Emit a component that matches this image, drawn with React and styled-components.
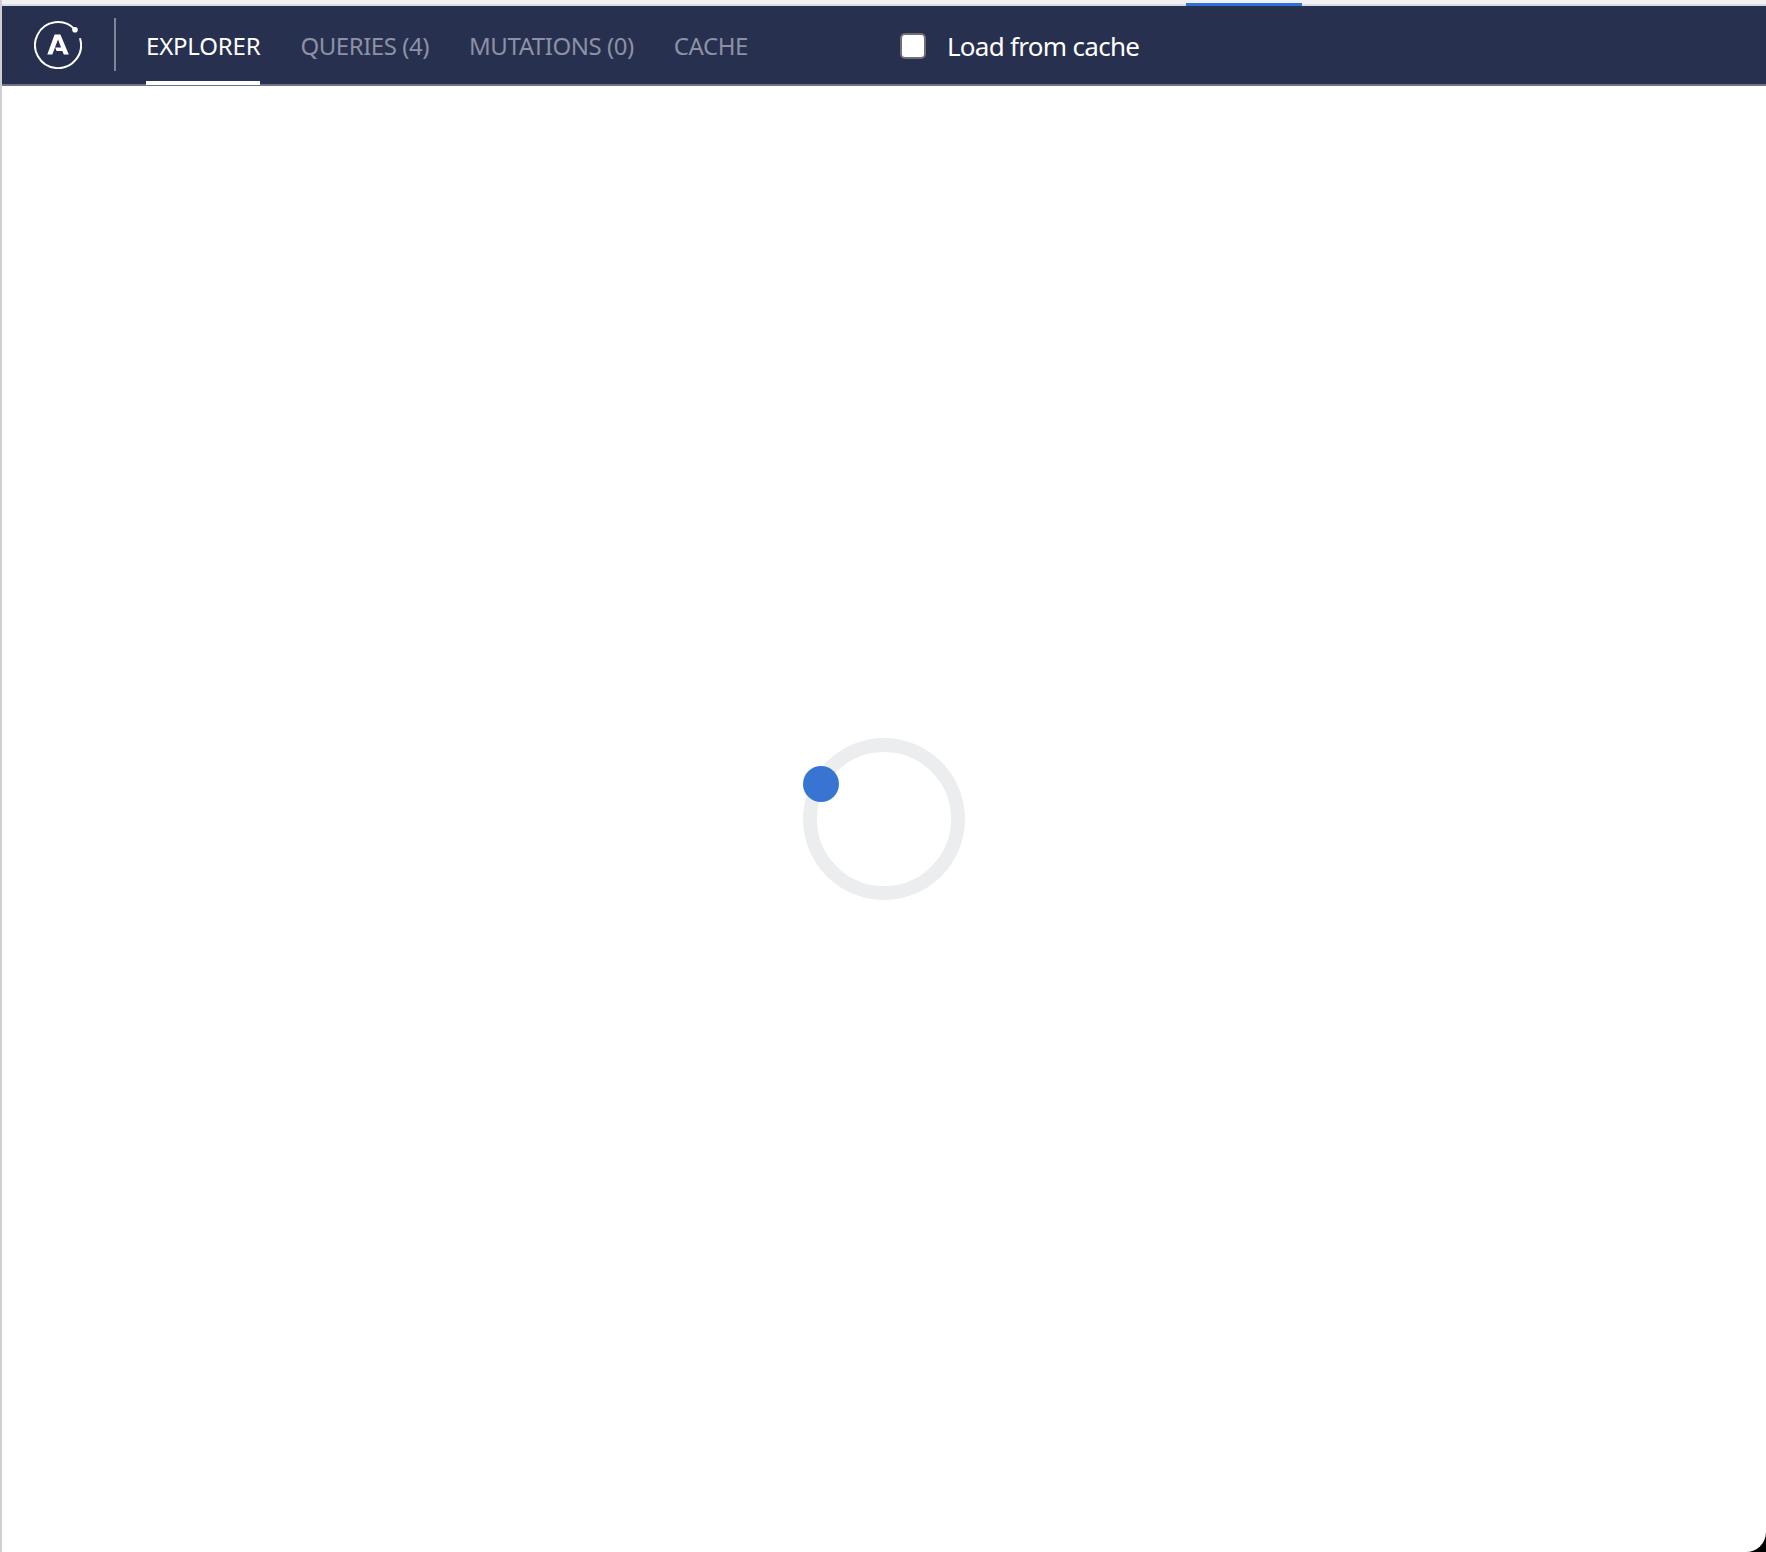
import React from "react";
import styled, { createGlobalStyle } from "styled-components";

const GlobalStyle = createGlobalStyle`
  html, body {
    margin: 0;
    padding: 0;
    background: #000;
  }

  #root {
    height: 1552px;
  }
`;

const Page = styled.div`
  display: flex;
  flex-direction: column;
  height: 1552px;
  background: #fff;
  border-left: 2px solid #cfcfd3;
  border-bottom-right-radius: 20px;
  overflow: hidden;
  font-family: "Noto Sans", "Open Sans", sans-serif;
`;

const TopStrip = styled.div`
  position: relative;
  flex: none;
  height: 4px;
  background: #f1f1f3;
  border-bottom: 2px solid #dcdde0;
`;

const ActiveIndicator = styled.div`
  position: absolute;
  left: 1184px;
  top: 3px;
  width: 116px;
  height: 3px;
  background: #3070d8;
`;

const Nav = styled.nav`
  display: flex;
  flex: none;
  align-items: stretch;
  height: 78px;
  background: #27304f;
  border-bottom: 2px solid #6f7388;
`;

const LogoBox = styled.div`
  display: flex;
  align-items: center;
  height: 53px;
  align-self: center;
  margin-top: -1px;
  padding: 0 32px;
  border-right: 2px solid #81859a;
`;

const Tabs = styled.ul`
  display: flex;
  gap: 40px;
  margin: 0 0 0 30px;
  padding: 0;
  list-style: none;
`;

const Tab = styled.li`
  position: relative;
  display: flex;
  align-items: center;
  padding-top: 1px;
  font-size: 24px;
  letter-spacing: ${(p) => (p.$active ? "-0.2px" : "-0.45px")};
  color: ${(p) => (p.$active ? "#fff" : "#8d91a5")};

  ${(p) =>
    p.$active &&
    `
    &::after {
      content: "";
      position: absolute;
      left: 0;
      right: 0;
      bottom: -1px;
      height: 4px;
      background: #fff;
    }
  `}
`;

const CacheLabel = styled.label`
  display: flex;
  align-items: center;
  gap: 21px;
  margin-left: 152px;
  padding-top: 1px;
  font-size: 26px;
  letter-spacing: -0.7px;
  color: #fff;
`;

const CacheCheckbox = styled.input`
  appearance: none;
  box-sizing: border-box;
  width: 26px;
  height: 26px;
  margin: 0;
  background: #fff;
  border: 2px solid #707074;
  border-radius: 5px;
`;

const Content = styled.main`
  display: flex;
  flex: 1;
  align-items: center;
  justify-content: center;
`;

const Spinner = styled.div`
  position: relative;
  box-sizing: border-box;
  width: 162px;
  height: 162px;
  border: 14.5px solid #ecedef;
  border-radius: 50%;
`;

const SpinnerDot = styled.div`
  position: absolute;
  left: -14.5px;
  top: 13.5px;
  width: 36px;
  height: 36px;
  background: #3875d3;
  border-radius: 50%;
`;

const ApolloLogo = () => (
  <svg width="48" height="48" viewBox="0 0 48 48" fill="none">
    <path
      d="M41 8.6A23 23 0 1 0 46.2 18"
      stroke="#fff"
      strokeWidth="2"
      strokeLinecap="round"
    />
    <circle cx="41" cy="8.8" r="2.8" fill="#fff" />
    <path
      fillRule="evenodd"
      d="M20.6 13.5h5.8l8.4 20h-5l-1.4-3.6h-5.9l-1.3-3.3h5.9L24 18.4 18.3 33.5h-5z"
      fill="#fff"
    />
  </svg>
);

const App = () => {
  return (
    <>
      <GlobalStyle />
      <Page>
        <TopStrip>
          <ActiveIndicator />
        </TopStrip>
        <Nav>
          <LogoBox>
            <ApolloLogo />
          </LogoBox>
          <Tabs>
            <Tab $active>EXPLORER</Tab>
            <Tab>QUERIES (4)</Tab>
            <Tab>MUTATIONS (0)</Tab>
            <Tab>CACHE</Tab>
          </Tabs>
          <CacheLabel>
            <CacheCheckbox type="checkbox" />
            Load from cache
          </CacheLabel>
        </Nav>
        <Content>
          <Spinner>
            <SpinnerDot />
          </Spinner>
        </Content>
      </Page>
    </>
  );
};

export default App;
